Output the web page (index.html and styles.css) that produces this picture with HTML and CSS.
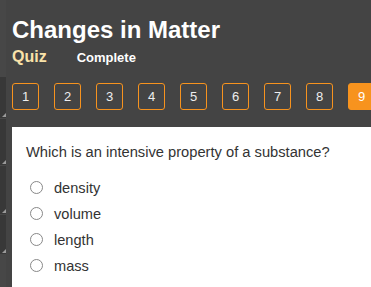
FILE: index.html
```html
<!DOCTYPE html>
<html>
<head>
<meta charset="utf-8">
<link rel="stylesheet" href="styles.css">
</head>
<body>
<div class="page">
  <aside class="rail">
    <div class="slot s1"></div>
    <div class="slot s2"></div>
    <div class="slot s3"></div>
    <div class="slot s4"></div>
  </aside>
  <main class="main">
    <header class="header">
      <h1 class="title">Changes in Matter</h1>
      <div class="sub">
        <span class="quiz">Quiz</span>
        <span class="status">Complete</span>
      </div>
    </header>
    <nav class="steps">
      <span class="step">1</span>
      <span class="step">2</span>
      <span class="step">3</span>
      <span class="step">4</span>
      <span class="step">5</span>
      <span class="step">6</span>
      <span class="step">7</span>
      <span class="step">8</span>
      <span class="step active">9</span>
    </nav>
    <section class="panel">
      <p class="question">Which is an intensive property of a substance?</p>
      <ul class="options">
        <li class="option"><span class="radio"></span><span>density</span></li>
        <li class="option"><span class="radio"></span><span>volume</span></li>
        <li class="option"><span class="radio"></span><span>length</span></li>
        <li class="option"><span class="radio"></span><span>mass</span></li>
      </ul>
    </section>
  </main>
</div>
</body>
</html>
```
FILE: styles.css
```css
html, body {
  margin: 0;
  padding: 0;
  height: 100%;
  background: #444444;
  overflow: hidden;
}
.page {
  display: flex;
  height: 100%;
  font-family: "Liberation Sans", Arial, sans-serif;
}
.rail {
  width: 6px;
  flex: none;
  padding-top: 77px;
  display: flex;
  flex-direction: column;
  gap: 1px;
  background: #474747;
}
.slot {
  position: relative;
  background: #383838;
}
.slot::after {
  content: "";
  position: absolute;
  right: 0;
  bottom: 1px;
  width: 0;
  height: 0;
  border-left: 4px solid transparent;
  border-bottom: 4px solid #9a9a9a;
}
.s1 { height: 41px; }
.s2 { height: 46px; }
.s3 { height: 48px; }
.s4 { height: 39px; }
.main {
  flex: 1;
  min-width: 0;
  padding-left: 6px;
  padding-top: 16px;
  display: flex;
  flex-direction: column;
  overflow: hidden;
}
.header {
  margin: 0;
}
.title {
  margin: 0;
  font-size: 24px;
  line-height: 28px;
  font-weight: bold;
  color: #ffffff;
  white-space: nowrap;
}
.sub {
  margin-top: 3px;
  display: flex;
  align-items: baseline;
  gap: 30px;
  line-height: 20px;
}
.quiz {
  font-size: 16px;
  font-weight: bold;
  color: #f9e2a9;
}
.status {
  font-size: 13px;
  font-weight: bold;
  color: #ffffff;
}
.steps {
  margin-top: 15px;
  display: flex;
  gap: 15px;
  white-space: nowrap;
}
.step {
  flex: none;
  box-sizing: border-box;
  width: 27px;
  height: 27px;
  border: 1px solid #f7931e;
  border-radius: 3px;
  display: flex;
  align-items: center;
  justify-content: center;
  font-size: 13px;
  color: #eeeeee;
}
.step.active {
  background: #f7931e;
  color: #ffffff;
}
.panel {
  margin-top: 17px;
  flex: 1;
  background: #ffffff;
  padding: 15px 14px 0 14px;
}
.question {
  margin: 0;
  font-size: 14.7px;
  line-height: 20px;
  color: #333333;
  white-space: nowrap;
}
.options {
  list-style: none;
  margin: 13px 0 0 0;
  padding: 0 0 0 4px;
}
.option {
  display: flex;
  align-items: center;
  gap: 11px;
  height: 26px;
  font-size: 14.6px;
  color: #333333;
}
.radio {
  box-sizing: border-box;
  width: 13px;
  height: 13px;
  border: 1px solid #888888;
  border-radius: 50%;
  background: #ffffff;
  flex: none;
  margin-top: -1px;
}
```
